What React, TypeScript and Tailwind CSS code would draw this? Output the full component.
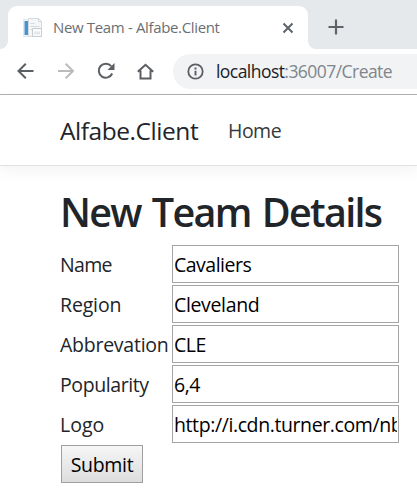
import React from 'react';

const fields = [
  { label: 'Name', value: 'Cavaliers', labelStyle: 'tracking-[-0.65px]', valueStyle: 'tracking-[-0.5px]' },
  { label: 'Region', value: 'Cleveland', labelStyle: 'tracking-[-0.15px]', valueStyle: 'tracking-[-0.35px]' },
  { label: 'Abbrevation', value: 'CLE', labelStyle: 'tracking-[-0.25px]', valueStyle: 'tracking-[-0.5px]' },
  { label: 'Popularity', value: '6,4', labelStyle: 'tracking-[-0.4px]', valueStyle: 'tracking-[-0.5px]' },
  { label: 'Logo', value: 'http://i.cdn.turner.com/nba/nba/', labelStyle: 'tracking-[0px]', valueStyle: 'tracking-[-0.4px]' },
];

function PageIcon() {
  return (
    <svg className="ml-[15px] h-5 w-5 shrink-0" viewBox="0 0 20 20">
      <path d="M.5 1.5h6v17h-6z" fill="#f2f4f6" stroke="#e3e6e8" />
      <path d="M1.500 3h3.500v14H1.500z" fill="#4496cf" />
      <path d="M5.500 .5h10l3 3v15h-13z" fill="#f4f6f7" stroke="#d5dadd" />
      <path d="M15.500.5v3h3M7.500 5.500h4M7.500 8.500h9M7.500 11.500h2" fill="none" stroke="#d6dade" />
      <path d="M9.500 10.500h9v8h-9z" fill="#fbfbfb" stroke="#c6cbcf" />
      <path d="M11 13.500h6v3h-6z" fill="#e5e7e9" />
    </svg>
  );
}

function Toolbar() {
  return (
    <div className="flex h-[46px] border-b border-[#b1b1b1] bg-white pt-[5px]">
      <svg className="h-[35px] w-[173px] shrink-0" viewBox="0 54 173 35" fill="none" strokeWidth="2" stroke="#5b5e62">
        <path d="M33.500 71H19M25.800 63.700L18.500 71l7.300 7.300" />
        <path d="M58 71h14.500M65.700 63.700L73 71l-7.300 7.300" stroke="#b9bbbd" />
        <path d="M111.200 66.200A7 7 0 1 0 112.200 73.500" />
        <path d="M114.500 63v7h-7z" fill="#5b5e62" stroke="none" />
        <path d="M137.800 71.800L145.500 64.800l7.700 7M140.500 70.500V78.500h10V70.500" />
      </svg>
      <div className="flex h-[35px] flex-1 items-center rounded-l-full bg-[#f1f3f4]">
        <svg className="ml-[14px] h-[17px] w-[17px] shrink-0" viewBox="0 0 17 17" fill="none" stroke="#5b5e62">
          <circle cx="8.500" cy="8.500" r="7.200" strokeWidth="1.800" />
          <path d="M8.500 7.700v4.800M8.500 4.500v1.900" strokeWidth="1.900" />
        </svg>
        <span className="ml-3 whitespace-nowrap pt-px text-[17.5px] leading-none tracking-[-0.55px] text-[#80868b]">
          <span className="text-[#202124]">localhost</span>:36007/Create
        </span>
      </div>
    </div>
  );
}

export default function App() {
  return (
    <div className="h-[493px] w-[417px] overflow-hidden bg-white font-['Open_Sans','Noto_Sans',sans-serif] text-[#212529]">
      <div className="flex h-[49px] items-end bg-[#e5e9ec]">
        <svg className="h-2 w-2 shrink-0" viewBox="0 0 8 8"><path d="M8 0v8H0a8 8 0 0 0 8-8z" fill="#fff" /></svg>
        <div className="flex h-[43px] w-[300px] items-center rounded-t-[9px] bg-white">
          <PageIcon />
          <span className="ml-[10px] whitespace-nowrap text-[15px] leading-none tracking-[-0.35px] text-[#6b6f73]">New Team - Alfabe.Client</span>
          <svg className="ml-auto mr-[14px] h-3 w-3 shrink-0" viewBox="0 0 12 12"><path d="M1.500 1.500l9 9M10.500 1.500l-9 9" stroke="#5f6368" strokeWidth="2" /></svg>
        </div>
        <svg className="h-2 w-2 shrink-0" viewBox="0 0 8 8"><path d="M0 0v8h8a8 8 0 0 1-8-8z" fill="#fff" /></svg>
        <svg className="mb-[14px] ml-3 h-4 w-4" viewBox="0 0 16 16"><path d="M8 .5v15M.5 8h15" stroke="#5f6368" strokeWidth="2.200" /></svg>
      </div>
      <Toolbar />
      <nav className="flex h-[71px] items-center border-b border-[#dee2e6] bg-white pl-[60px] pt-[2px] shadow-[0_5px_15px_rgba(0,0,0,0.05)]">
        <span className="w-[168px] whitespace-nowrap text-[24.5px] leading-none tracking-[-0.45px]">Alfabe.Client</span>
        <span className="text-[19.5px] leading-none tracking-[-0.5px] text-[#343a40]">Home</span>
      </nav>
      <main className="pl-[61px] pt-[20px]">
        <h1 className="-ml-px h-[59px] whitespace-nowrap text-[39.5px] leading-[52px] font-semibold tracking-[-1.7px] [word-spacing:2.5px]">New Team Details</h1>
        <form className="flex flex-col gap-[2px]" onSubmit={(e) => e.preventDefault()}>
          {fields.map((f) => (
            <label key={f.label} className="flex h-[38px] items-center text-[19.5px]">
              <span className={`-ml-px w-[112px] shrink-0 whitespace-nowrap pt-[2px] ${f.labelStyle}`}>{f.label}</span>
              <input readOnly value={f.value} className={`h-[38px] w-[227px] border border-[#a5a5a7] bg-white px-px pt-px text-black outline-none ${f.valueStyle}`} />
            </label>
          ))}
          <button className="h-[38px] w-[82px] border border-[#a0a0a0] bg-gradient-to-b from-[#f6f6f6] to-[#dddddd] pt-[2px] text-[19.5px] leading-none tracking-[-0.3px] text-black">Submit</button>
        </form>
      </main>
    </div>
  );
}
